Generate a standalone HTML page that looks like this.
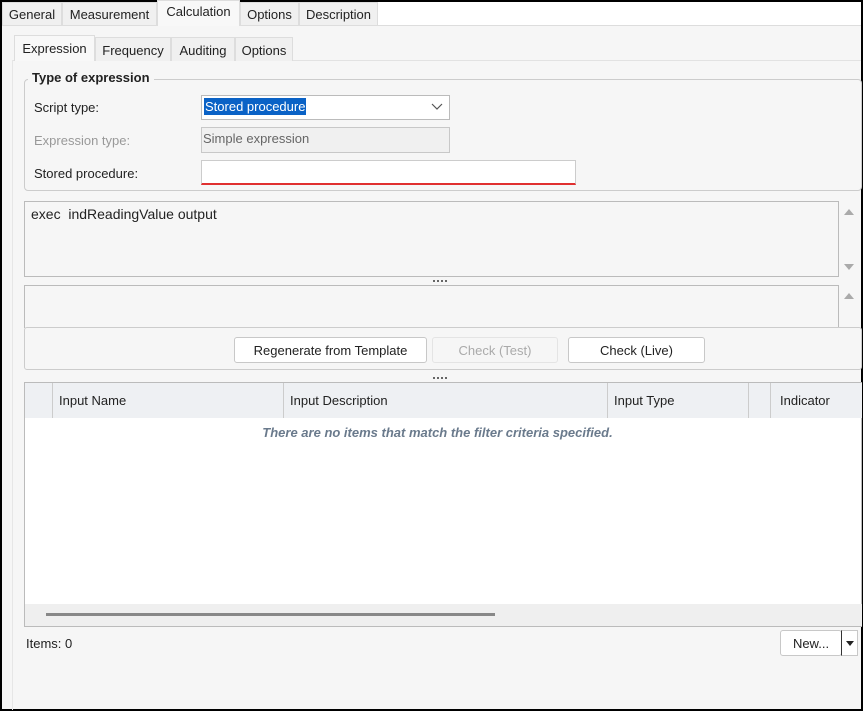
<!DOCTYPE html>
<html><head><style>
*{box-sizing:border-box;margin:0;padding:0}
body{width:863px;height:711px;position:relative;background:#000;font-family:"Liberation Sans",sans-serif;font-size:13px;color:#222;overflow:hidden}
.a{position:absolute}
#main{left:2px;top:2px;width:859px;height:707px;background:#f6f6f6}
.tab{position:absolute;top:2px;height:23px;background:#f0f0f0;border:1px solid #ddd;border-bottom:none;padding:4px 0 0 0;text-align:center;font-size:13px}
.sel{background:#f8f8f8;top:0;height:26px;padding-top:3px}
.st{position:absolute;top:37px;height:24px;background:#f0f0f0;border:1px solid #ddd;border-bottom:none;padding-top:5px;text-align:center}
.btn{position:absolute;height:26px;background:#fff;border:1px solid #c8c8c8;border-radius:3px;text-align:center;padding-top:5px;font-size:13px}
.lbl{position:absolute;font-size:13px}
.hd{position:absolute;top:383px;height:35px;border-left:1px solid #ccc;padding:10px 0 0 6px;font-size:13px}
.dots{position:absolute;width:14px;height:2px;background:repeating-linear-gradient(90deg,#666 0 2px,transparent 2px 4px)}
</style></head><body>
<div id="main" class="a"></div>
<div class="a" style="left:378px;top:2px;width:483px;height:23px;background:#fff"></div>
<div class="a" style="left:2px;top:25px;width:859px;height:1px;background:#ddd"></div>
<div class="tab" style="left:2px;width:60px">General</div>
<div class="tab" style="left:62px;width:95px">Measurement</div>
<div class="tab sel" style="left:157px;width:83px">Calculation</div>
<div class="tab" style="left:240px;width:59px">Options</div>
<div class="tab" style="left:299px;width:79px">Description</div>
<div class="a" style="left:12px;top:60px;width:849px;height:1px;background:#e2e2e2"></div>
<div class="a" style="left:12px;top:60px;width:1px;height:650px;background:#e6e6e6"></div>
<div class="st" style="left:14px;width:81px;top:35px;height:26px;background:#f8f8f8;padding-top:5px">Expression</div>
<div class="st" style="left:95px;width:76px">Frequency</div>
<div class="st" style="left:171px;width:64px">Auditing</div>
<div class="st" style="left:235px;width:58px">Options</div>
<div class="a" style="left:24px;top:79px;width:838px;height:112px;border:1px solid #ccc;border-radius:4px"></div>
<div class="a" style="left:28px;top:70px;padding:0 4px;background:#f6f6f6;font-weight:bold;font-size:13px">Type of expression</div>
<div class="lbl" style="left:34px;top:100px">Script type:</div>
<div class="lbl" style="left:34px;top:133px;color:#999">Expression type:</div>
<div class="lbl" style="left:34px;top:166px">Stored procedure:</div>
<div class="a" style="left:201px;top:95px;width:249px;height:25px;background:#fff;border:1px solid #bbb"></div>
<div class="a" style="left:204px;top:98px;background:#0a62c6;color:#fff;padding:0 1px;height:17px;line-height:17px">Stored procedure</div>
<svg class="a" style="left:431px;top:103px" width="12" height="8"><path d="M1 1 L6 6 L11 1" stroke="#555" fill="none" stroke-width="1.2"/></svg>
<div class="a" style="left:201px;top:127px;width:249px;height:26px;background:#f0f0f0;border:1px solid #c8c8c8;padding:3px 0 0 1px;color:#666">Simple expression</div>
<div class="a" style="left:201px;top:160px;width:375px;height:25px;background:#fff;border:1px solid #ccc;border-bottom:2px solid #e03030"></div>
<div class="a" style="left:24px;top:201px;width:815px;height:76px;border:1px solid #bbb;background:#f6f6f6;padding:4px 6px;font-size:14px">exec&nbsp; indReadingValue output</div>
<svg class="a" style="left:843px;top:207px" width="12" height="70"><path d="M1 8 L6 2 L11 8Z" fill="#aaa"/><path d="M1 57 L6 63 L11 57Z" fill="#aaa"/></svg>
<div class="dots" style="left:433px;top:280px"></div>
<div class="a" style="left:24px;top:285px;width:815px;height:43px;border:1px solid #bbb;border-bottom:none"></div>
<svg class="a" style="left:843px;top:291px" width="12" height="10"><path d="M1 8 L6 2 L11 8Z" fill="#aaa"/></svg>
<div class="a" style="left:24px;top:327px;width:838px;height:43px;border:1px solid #ccc;border-radius:3px"></div>
<div class="btn" style="left:234px;top:337px;width:193px">Regenerate from Template</div>
<div class="btn" style="left:432px;top:337px;width:126px;background:#f6f6f6;border-color:#e4e4e4;color:#aaa">Check (Test)</div>
<div class="btn" style="left:568px;top:337px;width:137px">Check (Live)</div>
<div class="dots" style="left:433px;top:377px"></div>
<div class="a" style="left:24px;top:382px;width:838px;height:245px;border:1px solid #bbb;background:#fff"></div>
<div class="a" style="left:25px;top:383px;width:837px;height:35px;background:#eef0f3"></div>
<div class="hd" style="left:52px;width:231px">Input Name</div>
<div class="hd" style="left:283px;width:324px">Input Description</div>
<div class="hd" style="left:607px;width:141px">Input Type</div>
<div class="hd" style="left:748px;width:22px"></div>
<div class="hd" style="left:770px;width:92px;padding-left:9px">Indicator</div>
<div class="a" style="left:25px;top:425px;width:825px;text-align:center;font-style:italic;font-weight:bold;color:#6a7a8c;font-size:13px">There are no items that match the filter criteria specified.</div>
<div class="a" style="left:25px;top:604px;width:837px;height:22px;background:#efefef"></div>
<div class="a" style="left:46px;top:613px;width:449px;height:3px;background:#888"></div>
<div class="lbl" style="left:26px;top:636px">Items: 0</div>
<div class="btn" style="left:780px;top:630px;width:62px;padding-top:5px">New...</div>
<div class="a" style="left:841px;top:630px;width:17px;height:26px;background:#fff;border:1px solid #c8c8c8;border-left:1px solid #333"></div>
<svg class="a" style="left:845px;top:640px" width="10" height="6"><path d="M1 1 L9 1 L5 6Z" fill="#222"/></svg>
</body></html>
